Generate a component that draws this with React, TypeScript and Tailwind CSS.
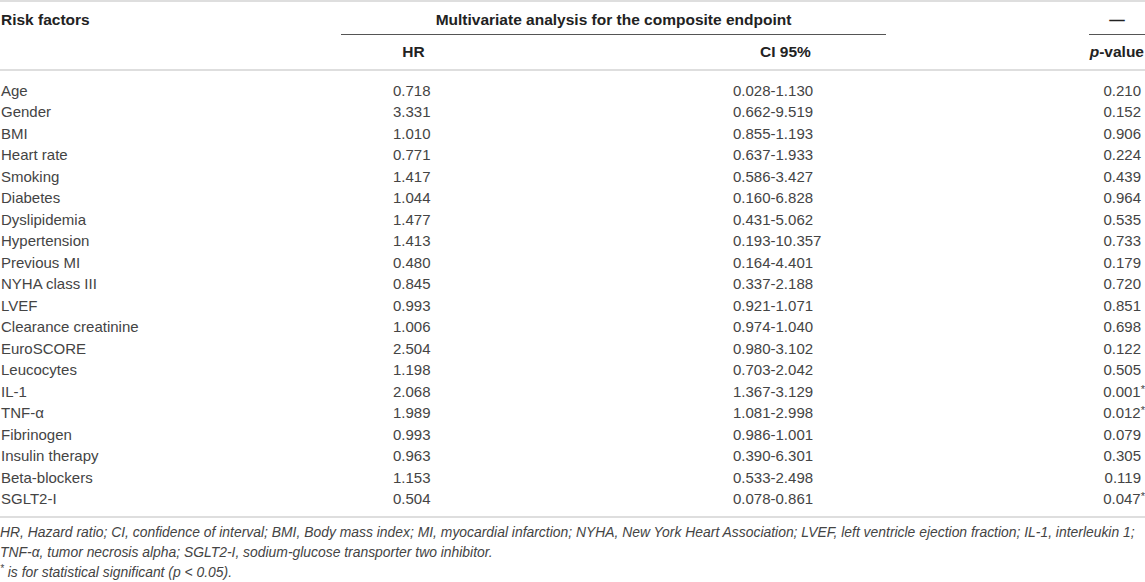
import React from "react";

const rows: [string, string, string, string, boolean][] = [
  ["Age", "0.718", "0.028-1.130", "0.210", false],
  ["Gender", "3.331", "0.662-9.519", "0.152", false],
  ["BMI", "1.010", "0.855-1.193", "0.906", false],
  ["Heart rate", "0.771", "0.637-1.933", "0.224", false],
  ["Smoking", "1.417", "0.586-3.427", "0.439", false],
  ["Diabetes", "1.044", "0.160-6.828", "0.964", false],
  ["Dyslipidemia", "1.477", "0.431-5.062", "0.535", false],
  ["Hypertension", "1.413", "0.193-10.357", "0.733", false],
  ["Previous MI", "0.480", "0.164-4.401", "0.179", false],
  ["NYHA class III", "0.845", "0.337-2.188", "0.720", false],
  ["LVEF", "0.993", "0.921-1.071", "0.851", false],
  ["Clearance creatinine", "1.006", "0.974-1.040", "0.698", false],
  ["EuroSCORE", "2.504", "0.980-3.102", "0.122", false],
  ["Leucocytes", "1.198", "0.703-2.042", "0.505", false],
  ["IL-1", "2.068", "1.367-3.129", "0.001", true],
  ["TNF-α", "1.989", "1.081-2.998", "0.012", true],
  ["Fibrinogen", "0.993", "0.986-1.001", "0.079", false],
  ["Insulin therapy", "0.963", "0.390-6.301", "0.305", false],
  ["Beta-blockers", "1.153", "0.533-2.498", "0.119", false],
  ["SGLT2-I", "0.504", "0.078-0.861", "0.047", true],
];

export default function App() {
  return (
    <div className="w-[1145px] h-[582px] overflow-hidden bg-white font-['Liberation_Sans',Arial,sans-serif] text-[15px] leading-[20px] text-[#444]">
      <div className="border-t-2 border-[#dedede]">
        <div className="grid grid-cols-[341px_545px_203px_56px] font-bold text-[15.5px] text-[#222]">
          <div className="pt-[8px] h-[33px] pl-[1px]">Risk factors</div>
          <div className="pt-[8px] h-[33px] text-center border-b border-[#555]">
            Multivariate analysis for the composite endpoint
          </div>
          <div />
          <div className="pt-[8px] h-[33px] text-center border-b border-[#555]">—</div>
        </div>
        <div className="grid grid-cols-[341px_145px_400px_1fr] font-bold text-[15.5px] text-[#222] border-b-2 border-[#dedede] pt-[7px] pb-[7px]">
          <div />
          <div className="text-center">HR</div>
          <div className="pl-[274px]">CI 95%</div>
          <div className="text-right pr-[1px]">
            <span className="italic">p</span>-value
          </div>
        </div>
      </div>
      <div className="pt-[9px] pb-[6px] border-b-2 border-[#dedede]">
        {rows.map(([name, hr, ci, p, sig]) => (
          <div
            key={name}
            className="grid grid-cols-[341px_145px_400px_1fr] h-[21.5px] items-center"
          >
            <div className="pl-[1px]">{name}</div>
            <div className="pl-[52px]">{hr}</div>
            <div className="pl-[247px]">{ci}</div>
            <div className={sig ? "text-right pr-[0px]" : "text-right pr-[4px]"}>
              {p}
              {sig && <span className="text-[11px] align-top leading-[14px]">*</span>}
            </div>
          </div>
        ))}
      </div>
      <div className="pt-[4px] italic text-[13.9px] leading-[20px] text-[#444]">
        <div>
          HR, Hazard ratio; CI, confidence of interval; BMI, Body mass index; MI, myocardial
          infarction; NYHA, New York Heart Association; LVEF, left ventricle ejection fraction;
          IL-1, interleukin 1;
        </div>
        <div>TNF-α, tumor necrosis alpha; SGLT2-I, sodium-glucose transporter two inhibitor.</div>
        <div>
          <span className="text-[10px] align-top leading-[14px]">*</span> is for statistical
          significant (p &lt; 0.05).
        </div>
      </div>
    </div>
  );
}
